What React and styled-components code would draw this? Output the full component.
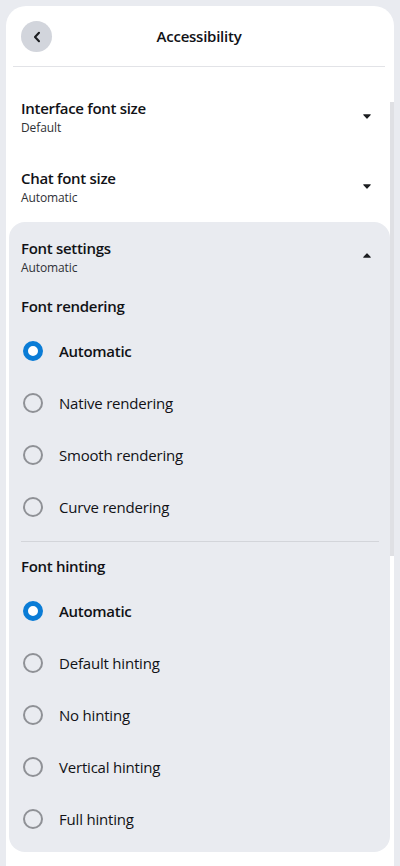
import React from "react";
import styled, { createGlobalStyle } from "styled-components";

const renderingOptions = ["Automatic", "Native rendering", "Smooth rendering", "Curve rendering"];
const hintingOptions = ["Automatic", "Default hinting", "No hinting", "Vertical hinting", "Full hinting"];

const Caret = ({ up }) => (
  <CaretIcon viewBox="0 0 8 5" $up={up}>
    <path d="M.7.3h6.6a.5.5 0 0 1 .4.8L4.4 4.6a.6.6 0 0 1-.8 0L.3 1.1A.5.5 0 0 1 .7.3z" />
  </CaretIcon>
);

const RadioGroup = ({ title, options }) => (
  <>
    <GroupTitle>{title}</GroupTitle>
    <Options>
      {options.map((option, i) => (
        <Option key={option}>
          <Radio $checked={i === 0} />
          <OptionLabel $checked={i === 0}>{option}</OptionLabel>
        </Option>
      ))}
    </Options>
  </>
);

const App = () => {
  return (
    <>
      <GlobalStyle />
      <Page>
        <Card>
          <Header>
            <BackButton aria-label="Back">
              <svg width="16" height="16" viewBox="0 0 16 16" fill="none">
                <path d="M10 3.8L6 8l4 4.2" stroke="#1c1e21" strokeWidth="2.1" strokeLinecap="round" strokeLinejoin="round" />
              </svg>
            </BackButton>
            <Title>Accessibility</Title>
          </Header>
          <Sections>
            <Section>
              <SectionText>
                <SectionTitle>Interface font size</SectionTitle>
                <SectionValue>Default</SectionValue>
              </SectionText>
              <Caret />
            </Section>
            <Section>
              <SectionText>
                <SectionTitle>Chat font size</SectionTitle>
                <SectionValue>Automatic</SectionValue>
              </SectionText>
              <Caret />
            </Section>
          </Sections>
          <Panel>
            <PanelHead>
              <SectionText>
                <SectionTitle>Font settings</SectionTitle>
                <SectionValue>Automatic</SectionValue>
              </SectionText>
              <Caret up />
            </PanelHead>
            <RadioGroup title="Font rendering" options={renderingOptions} />
            <PanelDivider />
            <RadioGroup title="Font hinting" options={hintingOptions} />
          </Panel>
          <ScrollThumb />
        </Card>
      </Page>
    </>
  );
};

export default App;

const GlobalStyle = createGlobalStyle`
  html, body {
    margin: 0;
    height: 100%;
    overflow: hidden;
    background: #e9ebf0;
  }
  body {
    font-family: "Open Sans", "Noto Sans", "Liberation Sans", sans-serif;
    color: #111216;
  }
`;

const Page = styled.div`
  height: 866px;
  box-sizing: border-box;
  padding: 6px 6px 0;
`;

const Card = styled.div`
  position: relative;
  height: 860px;
  box-sizing: border-box;
  padding: 0 4px 0 3px;
  background: #fff;
  border-radius: 20px 20px 0 0;
  overflow: hidden;
`;

const Header = styled.div`
  position: relative;
  height: 60px;
  margin: 0 5px 0 4px;
  display: flex;
  align-items: center;
  justify-content: center;
  border-bottom: 1px solid #e2e3e7;
`;

const BackButton = styled.button`
  position: absolute;
  left: 8px;
  top: 15px;
  width: 31px;
  height: 31px;
  padding: 0;
  border: 0;
  border-radius: 50%;
  background: #d2d5dc;
  display: flex;
  align-items: center;
  justify-content: center;
`;

const Title = styled.h1`
  margin: 0;
  font-size: 15px;
  font-weight: 600;
  line-height: 20px;
  letter-spacing: -0.25px;
`;

const Sections = styled.div`
  padding-top: 15px;
`;

const Section = styled.div`
  display: flex;
  align-items: center;
  justify-content: space-between;
  height: 70px;
  padding: 0 19px 0 12px;
`;

const SectionText = styled.div`
  display: flex;
  flex-direction: column;
`;

const SectionTitle = styled.div`
  font-size: 15px;
  font-weight: 600;
  line-height: 20px;
  letter-spacing: -0.3px;
`;

const SectionValue = styled.div`
  margin-top: 1px;
  font-size: 12px;
  line-height: 17px;
  letter-spacing: -0.1px;
  color: #2f3136;
`;

const CaretIcon = styled.svg`
  width: 8px;
  height: 5px;
  margin-top: -2px;
  fill: #1c1e21;
  transform: ${(p) => (p.$up ? "rotate(180deg)" : "none")};
`;

const Panel = styled.div`
  height: 630px;
  box-sizing: border-box;
  padding: 0 11px 0 12px;
  background: #e9ebf0;
  border-radius: 16px;
`;

const PanelHead = styled.div`
  display: flex;
  align-items: center;
  justify-content: space-between;
  height: 60px;
  padding: 9px 8px 0 0;
  box-sizing: border-box;
`;

const GroupTitle = styled.div`
  font-size: 15px;
  font-weight: 600;
  line-height: 20px;
  letter-spacing: -0.3px;
  padding-top: 14px;
`;

const Options = styled.div`
  display: flex;
  flex-direction: column;
  padding-top: 9px;
`;

const Option = styled.div`
  display: flex;
  align-items: center;
  gap: 16px;
  height: 52px;
  padding-left: 2px;
`;

const Radio = styled.span`
  width: 20px;
  height: 20px;
  box-sizing: border-box;
  border-radius: 50%;
  border: ${(p) => (p.$checked ? "5.5px solid #0a7cd6" : "2px solid #8f9196")};
  background: ${(p) => (p.$checked ? "#fff" : "transparent")};
`;

const OptionLabel = styled.span`
  font-size: 15px;
  line-height: 20px;
  letter-spacing: ${(p) => (p.$checked ? "-0.3px" : "-0.2px")};
  font-weight: ${(p) => (p.$checked ? 600 : 400)};
`;

const PanelDivider = styled.div`
  height: 1px;
  margin-top: 8px;
  background: #d3d5da;
`;

const ScrollThumb = styled.div`
  position: absolute;
  right: 0;
  top: 96px;
  width: 4px;
  height: 454px;
  background: #dfe0e4;
`;
